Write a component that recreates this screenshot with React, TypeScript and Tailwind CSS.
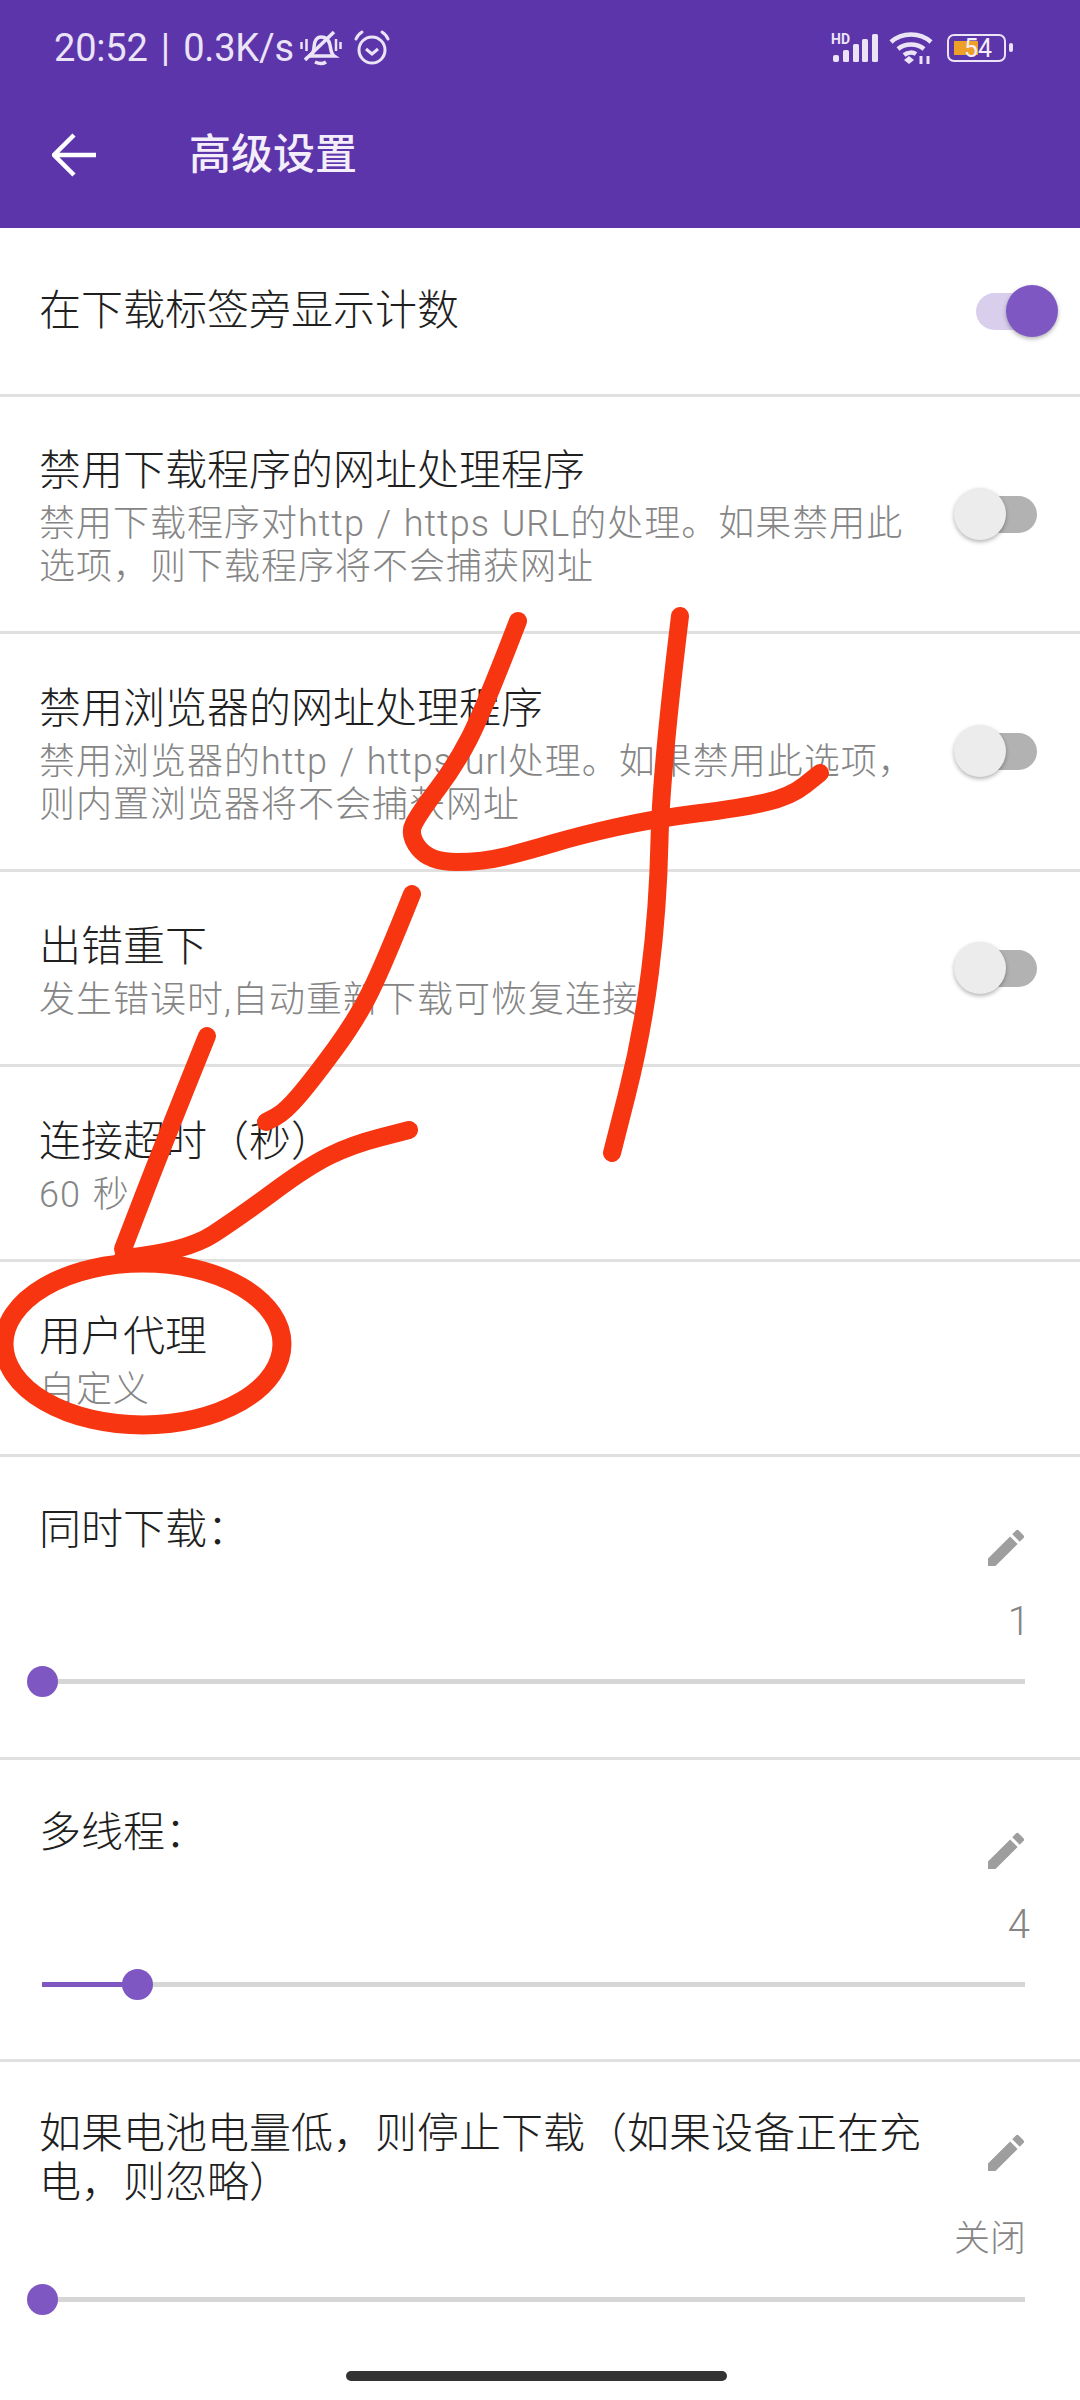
import { MdEdit } from "react-icons/md";

const font = { fontFamily: 'Roboto, "Noto Sans CJK SC", sans-serif' };

// pen strokes drawn over the screenshot
const strokes: number[][][] = [
  [[518, 621], [483, 712], [455, 766], [420, 812], [408, 835], [430, 862], [483, 862], [527, 851], [581, 835], [653, 819], [740, 808], [790, 797], [820, 773]],
  [[680, 616], [661, 772], [658, 909], [642, 1035], [612, 1153]],
  [[412, 894], [384, 964], [357, 1019], [313, 1079], [285, 1112], [266, 1122]],
  [[207, 1036], [165, 1140], [123, 1249]],
  [[123, 1258], [186, 1252], [241, 1216], [307, 1167], [351, 1145], [409, 1130]],
];

function smooth(pts: number[][]) {
  let d = `M${pts[0][0]} ${pts[0][1]}`;
  for (let i = 1; i < pts.length - 1; i++) {
    const mx = (pts[i][0] + pts[i + 1][0]) / 2;
    const my = (pts[i][1] + pts[i + 1][1]) / 2;
    d += ` Q${pts[i][0]} ${pts[i][1]} ${mx} ${my}`;
  }
  const last = pts[pts.length - 1];
  return d + ` L${last[0]} ${last[1]}`;
}

function StatusBar() {
  return (
    <div className="h-[96px] pl-[54px] pr-[67px] flex items-center justify-between text-[#ebe3f6]">
      <div className="flex items-center">
        <span className="text-[38px] leading-none tracking-[-0.2px] [word-spacing:4px]">20:52 | 0.3K/s</span>
        <svg width="42" height="38" viewBox="0 0 42 38" className="ml-[6px]" fill="none" stroke="currentColor" strokeWidth="3.5">
          <path d="M10 27c3-2 4-5 4-9 0-6 3-10 7-10 5 0 8 3 9 8 1 5 1 9 4 11H10z" />
          <path d="M15 33c4 2 8 2 11 0" />
          <path d="M5 31L34 3" />
          <path d="M1.5 13v7M6.5 10v12M36 10v12M40.5 13v7" strokeWidth="2.5" />
        </svg>
        <svg width="38" height="38" viewBox="0 0 38 38" className="ml-[11px]" fill="none" stroke="currentColor" strokeWidth="3">
          <circle cx="19" cy="21" r="13" />
          <path d="M13 20l6 5 6-5" />
          <path d="M3 10c1-3 3-5 6-7M35 10c-1-3-3-5-6-7" strokeLinecap="round" />
        </svg>
      </div>
      <div className="flex items-center">
        <div className="relative w-[48px] h-[30px]">
          <span className="absolute left-0 top-[-1px] text-[14px] leading-[14px] font-bold">HD</span>
          <svg width="48" height="30" viewBox="0 0 48 30" fill="currentColor">
            <rect x="2" y="22" width="6" height="7" rx="2" />
            <rect x="12" y="17" width="6" height="12" rx="1.5" />
            <rect x="22" y="11" width="6" height="18" rx="1.5" />
            <rect x="31" y="6" width="6" height="23" rx="1.5" />
            <rect x="41" y="1" width="6" height="28" rx="1.5" />
          </svg>
        </div>
        <svg width="44" height="34" viewBox="0 0 44 34" className="ml-[10px]" fill="none" stroke="currentColor" strokeWidth="4.5">
          <path d="M2 11c11-10 29-10 40 0" />
          <path d="M9 18c7-6 19-6 26 0" />
          <path d="M15 24c4-3 9-3 12-1" />
          <path d="M15 29l5-4 5 4-5 4z" fill="currentColor" stroke="none" />
          <path d="M32 25v8M39 25v8" strokeWidth="3" />
        </svg>
        <div className="relative ml-[14px] mr-[7px] w-[59px] h-[28px] rounded-[7px] border-[2.5px] border-[#ebe3f6]">
          <div className="absolute left-[5px] top-[5px] w-[24px] h-[14px] bg-[#ee9f27]" />
          <span className="absolute left-[15px] top-0 bottom-0 flex items-center text-[25px] leading-none text-[#f3eefa]">54</span>
          <div className="absolute right-[-9px] top-[7px] w-[4px] h-[9px] rounded-[2px] bg-[#ebe3f6]" />
        </div>
      </div>
    </div>
  );
}

function Toggle({ on }: { on?: boolean }) {
  return (
    <div className="relative w-[61px] h-[37px] mr-[43px] shrink-0">
      <div className={on ? "h-full rounded-full bg-[#d9cfed]" : "h-full rounded-full bg-[#b2b2b2]"} />
      <div
        className={
          on
            ? "absolute top-[-8px] right-[-21px] w-[52px] h-[52px] rounded-full bg-[#7e57c2] shadow-[0_2px_4px_rgba(0,0,0,0.3)]"
            : "absolute top-[-8px] left-[-22px] w-[52px] h-[52px] rounded-full bg-[#ececec] shadow-[0_2px_4px_rgba(0,0,0,0.3)]"
        }
      />
    </div>
  );
}

function Row({ title, sub, toggle, on, h }: { title: string; sub?: string[]; toggle?: boolean; on?: boolean; h: string }) {
  return (
    <div className={`${h} flex items-center justify-between pl-[39px] border-b-[3px] border-[#e0e0e0]`}>
      <div className={sub ? "flex flex-col pt-[4px]" : "flex flex-col"}>
        <div className="text-[42px] leading-[56px] font-light text-[#1f1f1f]">{title}</div>
        <div className={sub ? "mt-[4px]" : ""}>
          {sub?.map((s) => (
            <div key={s} className="text-[36px] leading-[43px] font-light text-[#858585] tracking-[1px] [word-spacing:2px] whitespace-nowrap">
              {s}
            </div>
          ))}
        </div>
      </div>
      {toggle && <Toggle on={on} />}
    </div>
  );
}

function SliderRow({ title, value, pct, h, lines }: { title: string[]; value: string; pct: number; h: string; lines?: boolean }) {
  return (
    <div className={lines ? `${h} pl-[39px] pr-[55px]` : `${h} pl-[39px] pr-[55px] border-b-[3px] border-[#e0e0e0]`}>
      <div className={lines ? "flex justify-between pt-[47px]" : "flex justify-between pt-[48px]"}>
        <div className="text-[42px] leading-[49px] font-light text-[#1f1f1f] w-[900px]">
          {title.map((t) => (
            <div key={t}>{t}</div>
          ))}
        </div>
        <MdEdit className={lines ? "mt-[20px] text-[48px] text-[#9e9e9e] shrink-0 mr-[-5px]" : "mt-[19px] text-[48px] text-[#9e9e9e] shrink-0 mr-[-5px]"} />
      </div>
      <div className={lines ? "text-right text-[36px] leading-[44px] font-light text-[#858585] mt-[10px] mr-[-1px]" : "text-right text-[40px] leading-[44px] font-light text-[#858585] mt-[28px] mr-[-5px]"}>{value}</div>
      <div className={lines ? "relative h-[5px] ml-[3px] bg-[#d6d6d6] mt-[36px]" : "relative h-[5px] ml-[3px] bg-[#d6d6d6] mt-[35px]"}>
        <div className="h-full bg-[#7e57c2]" style={{ width: `${pct}%` }} />
        <div className="absolute top-[-13px] w-[31px] h-[31px] ml-[-15px] rounded-full bg-[#7e57c2]" style={{ left: `${pct}%` }} />
      </div>
    </div>
  );
}

export default function App() {
  return (
    <div className="relative w-[1080px] h-[2400px] overflow-hidden bg-white" style={font}>
      <div className="h-[228px] bg-[#5c35aa]">
        <StatusBar />
        <div className="h-[132px] flex items-center pl-[52px] pb-[15px]">
          <svg width="44" height="44" viewBox="0 0 44 44" fill="none" stroke="white" strokeWidth="4.5">
            <path d="M44 22H4M22 2L2 22l20 20" />
          </svg>
          <span className="ml-[93px] text-[42px] font-medium text-[#f3eefa]">高级设置</span>
        </div>
      </div>

      <Row h="h-[169px]" title="在下载标签旁显示计数" toggle on />
      <Row h="h-[237px]" title="禁用下载程序的网址处理程序" sub={["禁用下载程序对http / https URL的处理。如果禁用此", "选项，则下载程序将不会捕获网址"]} toggle />
      <Row h="h-[238px]" title="禁用浏览器的网址处理程序" sub={["禁用浏览器的http / https url处理。如果禁用此选项，", "则内置浏览器将不会捕获网址"]} toggle />
      <Row h="h-[195px]" title="出错重下" sub={["发生错误时,自动重新下载可恢复连接"]} toggle />
      <Row h="h-[195px]" title="连接超时（秒）" sub={["60 秒"]} />
      <Row h="h-[195px]" title="用户代理" sub={["自定义"]} />
      <SliderRow h="h-[303px]" title={["同时下载："]} value="1" pct={0} />
      <SliderRow h="h-[302px]" title={["多线程："]} value="4" pct={9.7} />
      <SliderRow h="h-[338px]" title={["如果电池电量低，则停止下载（如果设备正在充", "电，则忽略）"]} value="关闭" pct={0} lines />

      {/* home indicator */}
      <div className="absolute bottom-[19px] left-[346px] w-[381px] h-[10px] rounded-full bg-[#333333]" />

      {/* pen marks over the page */}
      <svg className="absolute left-0 top-0 pointer-events-none" width="1080" height="2400" fill="none" stroke="#f73511" strokeLinecap="round" strokeLinejoin="round">
        {strokes.map((s, i) => (
          <path key={i} d={smooth(s)} strokeWidth="18" />
        ))}
        <ellipse cx="143" cy="1344" rx="139" ry="81" strokeWidth="19" />
      </svg>
    </div>
  );
}
